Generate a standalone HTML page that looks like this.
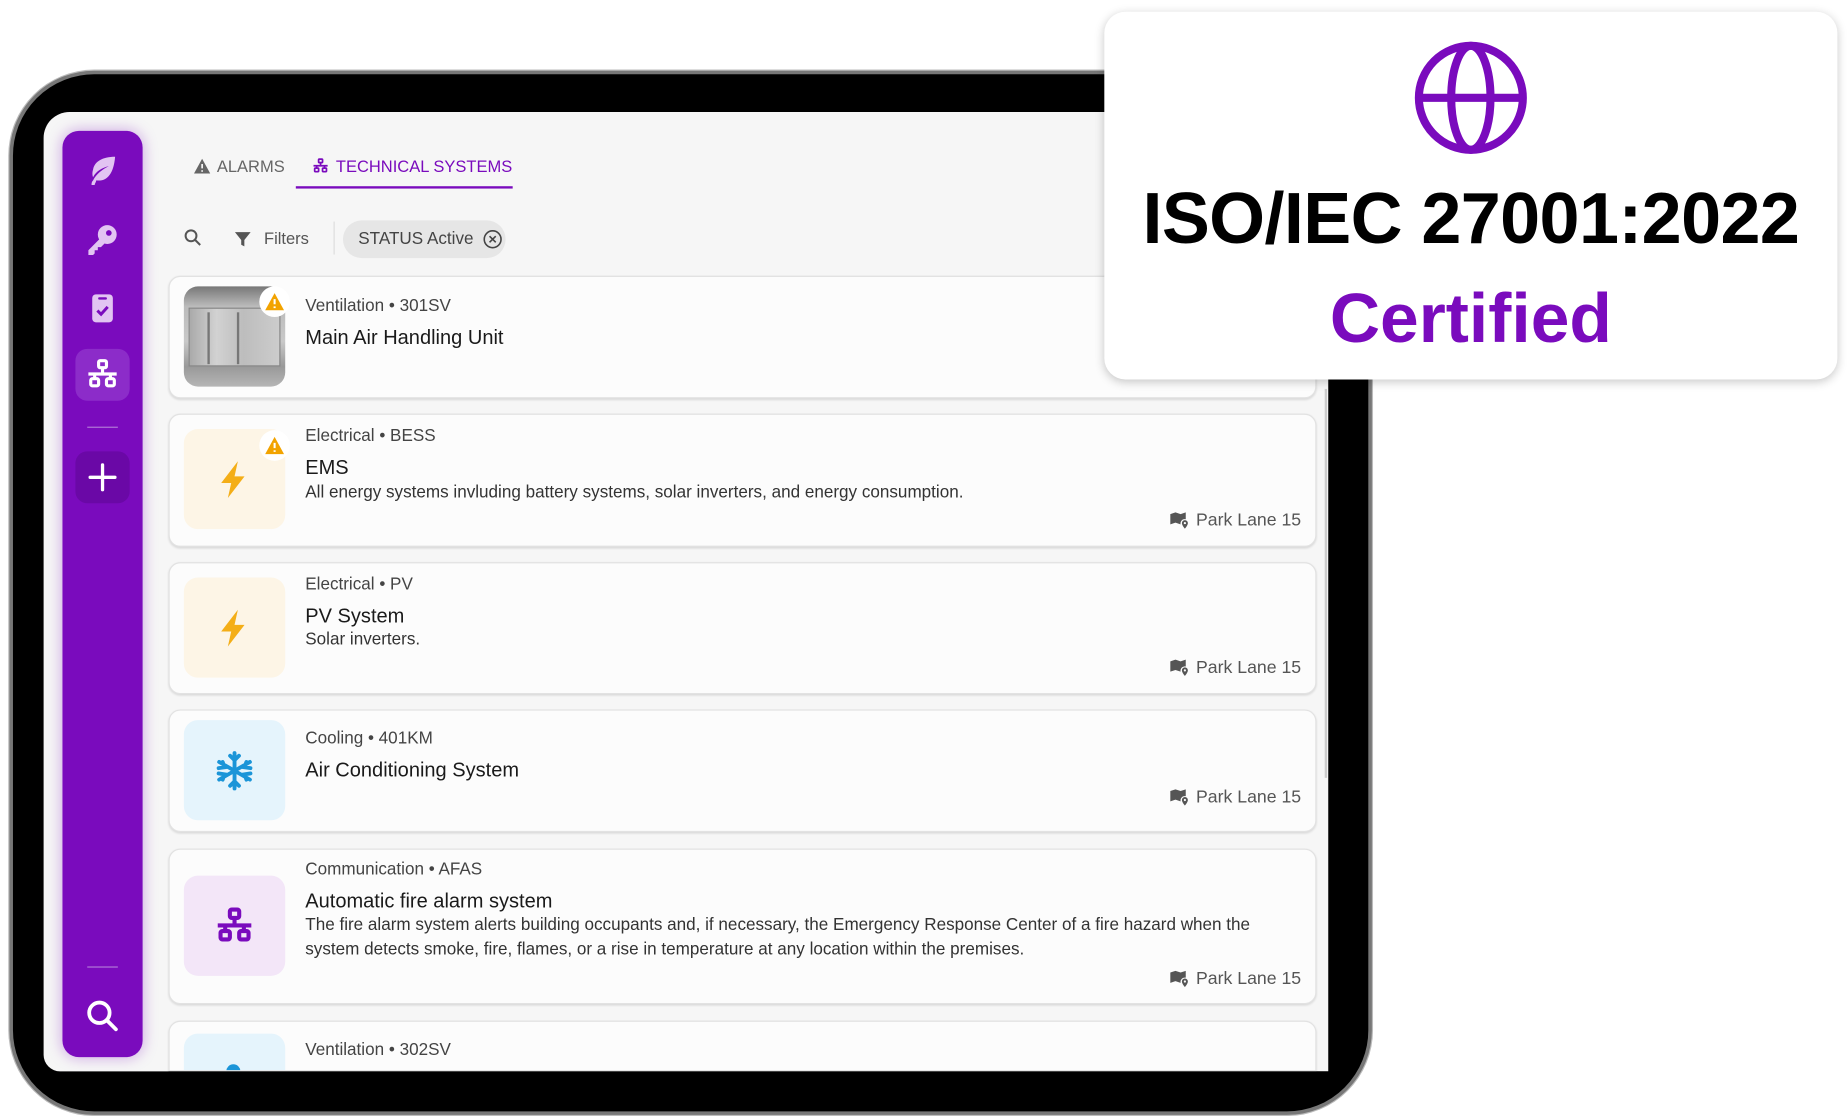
<!DOCTYPE html>
<html><head><meta charset="utf-8">
<style>
*{box-sizing:border-box;margin:0;padding:0}
html,body{width:1848px;height:1116px;overflow:hidden;background:#fff}
#w{position:absolute;left:0;top:0;width:1568px;height:947px;transform:scale(1.17857);transform-origin:0 0;font-family:"Liberation Sans",sans-serif}
.bezel{position:absolute;left:8px;top:60px;width:1156px;height:886px;background:#000;border-radius:72px;border:3px solid #777;box-shadow:0 0 0 1px #bbb}
.screen{position:absolute;left:37px;top:95px;width:1090px;height:814px;background:#f6f6f6;border-radius:22px 0 0 14px;overflow:hidden}
.side{position:absolute;left:53px;top:111px;width:68px;height:786px;background:#7a0bbd;border-radius:14px;box-shadow:0 0 12px rgba(122,11,189,.35)}
.ic{position:absolute;left:11px;width:46px;height:44px;border-radius:10px;display:flex;align-items:center;justify-content:center}
.card{position:absolute;left:143px;width:974px;background:#fcfcfc;border:1px solid #e2e2e2;border-radius:10px;box-shadow:0 1px 2px rgba(0,0,0,.12)}
.thumb{position:absolute;left:12px;width:86px;height:85px;border-radius:12px;display:flex;align-items:center;justify-content:center}
.cat{position:absolute;left:115px;font-size:14.5px;color:#444}
.ttl{position:absolute;left:115px;font-size:17px;color:#1a1a1a}
.desc{position:absolute;left:115px;font-size:14.5px;color:#333;line-height:21px;width:840px}
.loc{position:absolute;right:12px;font-size:15px;color:#555;display:flex;align-items:center;gap:5px}
.warn{position:absolute;left:76px;width:26px;height:26px;border-radius:50%;background:#fff;display:flex;align-items:center;justify-content:center}
.cert{position:absolute;left:937px;top:10px;width:622px;height:312px;background:#fff;border-radius:18px;box-shadow:0 2px 8px rgba(0,0,0,.22)}
</style></head><body><div id="w">
<div class="bezel"></div>
<div class="screen"></div>
<div style="position:absolute;left:1124px;top:330px;width:2px;height:330px;background:#ccc"></div>
<div class="side">
 <div class="ic" style="top:12px"><svg width="32" height="32" viewBox="0 0 24 24"><path fill="#e2c4f2" d="M20 3C12 3 7 6 6 11c-1 3 0 5 0 5 2-4 6-6 10-7-4 2-8 5-10 9-1 1-1 2-1 3h2c0-1 1-2 1-3 6 1 11-3 12-15z"/></svg></div>
 <div class="ic" style="top:70px"><svg width="32" height="32" viewBox="0 0 24 24"><circle cx="15" cy="9" r="6" fill="#e2c4f2"/><circle cx="16" cy="8" r="1.8" fill="#7a0bbd"/><path fill="#e2c4f2" d="M11 11l-8 8v3h3l1-1v-2h2v-2h2l3-3z"/></svg></div>
 <div class="ic" style="top:128px"><svg width="30" height="32" viewBox="0 0 24 24"><rect x="5" y="3" width="14" height="19" rx="2.5" fill="#e2c4f2"/><rect x="9" y="5" width="6" height="1.6" rx=".8" fill="#7a0bbd"/><path d="M8.5 14l2.5 2.5 4.5-5" stroke="#7a0bbd" stroke-width="2" fill="none"/></svg></div>
 <div class="ic" style="top:185px;background:#8c2cc9"><svg width="32" height="32" viewBox="0 0 24 24" fill="none" stroke="#fff" stroke-width="2"><rect x="9.5" y="3" width="5" height="4.5" rx="1"/><path d="M12 7.5v4M3 11.5h18M7 11.5v3M17 11.5v3"/><rect x="4.5" y="14.5" width="5" height="4.5" rx="1"/><rect x="14.5" y="14.5" width="5" height="4.5" rx="1"/></svg></div>
 <div style="position:absolute;left:21px;top:251px;width:26px;height:1px;background:#b27ad8"></div>
 <div class="ic" style="top:272px;background:#6a08a6"><svg width="28" height="28" viewBox="0 0 24 24" stroke="#fff" stroke-width="2.4" stroke-linecap="round"><path d="M12 3v18M3 12h18"/></svg></div>
 <div style="position:absolute;left:21px;top:709px;width:26px;height:1px;background:#b27ad8"></div>
 <div class="ic" style="top:729px"><svg width="32" height="32" viewBox="0 0 24 24" fill="none" stroke="#fff" stroke-width="2.4" stroke-linecap="round"><circle cx="10" cy="10" r="6.5"/><path d="M15 15l5.5 5.5"/></svg></div>
</div>
<!-- tabs -->
<div style="position:absolute;left:164px;top:133px;font-size:14px;color:#666;display:flex;align-items:center;gap:5px"><svg width="15" height="14" viewBox="0 0 24 22"><path d="M12 1L1 21h22z" fill="#666"/><path d="M12 8v6M12 16.5v2" stroke="#fff" stroke-width="2.2"/></svg>ALARMS</div>
<div style="position:absolute;left:264px;top:133px;font-size:14px;color:#7a0bbd;display:flex;align-items:center;gap:5px"><svg width="16" height="16" viewBox="0 0 24 24" fill="none" stroke="#7a0bbd" stroke-width="2.2"><rect x="9.5" y="3" width="5" height="4.5" rx="1"/><path d="M12 7.5v4M3 11.5h18M7 11.5v3M17 11.5v3"/><rect x="4.5" y="14.5" width="5" height="4.5" rx="1"/><rect x="14.5" y="14.5" width="5" height="4.5" rx="1"/></svg>TECHNICAL SYSTEMS</div>
<div style="position:absolute;left:251px;top:158px;width:184px;height:2px;background:#7a0bbd"></div>
<!-- filter row -->
<svg style="position:absolute;left:155px;top:193px" width="17" height="17" viewBox="0 0 24 24" fill="none" stroke="#555" stroke-width="2.4"><circle cx="10" cy="10" r="6.5"/><path d="M15 15l6 6"/></svg>
<svg style="position:absolute;left:198px;top:195px" width="16" height="16" viewBox="0 0 24 24"><path d="M2 3h20l-8 10v8l-4-2v-6z" fill="#555"/></svg>
<div style="position:absolute;left:224px;top:194px;font-size:14px;color:#555">Filters</div>
<div style="position:absolute;left:283px;top:188px;width:1px;height:28px;background:#ddd"></div>
<div style="position:absolute;left:291px;top:187px;width:138px;height:32px;border-radius:16px;background:#e6e6e6;font-size:14.5px;color:#444;display:flex;align-items:center;padding-left:13px;gap:7px">STATUS Active<svg width="18" height="18" viewBox="0 0 24 24" fill="none" stroke="#444" stroke-width="1.8"><circle cx="12" cy="12" r="9.5"/><path d="M8.5 8.5l7 7M15.5 8.5l-7 7"/></svg></div>

<!-- cards -->
<div class="card" style="top:234px;height:104px">
 <div class="thumb" style="top:8px;overflow:hidden;background:linear-gradient(180deg,#777 0%,#bbb 20%,#c8c8c8 55%,#999 80%,#b5b5b5 100%)">
  <div style="position:absolute;left:4px;top:18px;width:78px;height:50px;background:linear-gradient(90deg,#aaa,#d2d2d2 30%,#bdbdbd 60%,#ccc);border:1px solid #888"></div>
  <div style="position:absolute;left:20px;top:22px;width:2px;height:44px;background:#777"></div><div style="position:absolute;left:45px;top:22px;width:2px;height:44px;background:#777"></div>
 </div>
 <div class="warn" style="top:8px"><svg width="18" height="16" viewBox="0 0 24 22"><path d="M12 1L1 21h22z" fill="#f2a300"/><path d="M12 8v6M12 16.5v2" stroke="#fff" stroke-width="2.4"/></svg></div>
 <div class="cat" style="top:17px">Ventilation • 301SV</div>
 <div class="ttl" style="top:42px">Main Air Handling Unit</div>
</div>

<div class="card" style="top:351px;height:113px">
 <div class="thumb" style="top:12px;background:#fdf5e6"><svg width="34" height="38" viewBox="0 0 24 24"><path d="M14 1L4 14h6l-2 9 10-13h-6z" fill="#f4ae17"/></svg></div>
 <div class="warn" style="top:13px"><svg width="18" height="16" viewBox="0 0 24 22"><path d="M12 1L1 21h22z" fill="#f2a300"/><path d="M12 8v6M12 16.5v2" stroke="#fff" stroke-width="2.4"/></svg></div>
 <div class="cat" style="top:10px">Electrical • BESS</div>
 <div class="ttl" style="top:35px">EMS</div>
 <div class="desc" style="top:56px">All energy systems invluding battery systems, solar inverters, and energy consumption.</div>
 <div class="loc" style="top:81px"><svg width="18" height="16" viewBox="0 0 24 22"><path d="M1 3l6-2 6 2 6-2v8a5 5 0 0 0-6 6l-6-2-6 2z" fill="#555"/><path d="M18 10a3.5 3.5 0 0 1 3.5 3.5c0 2.5-3.5 6.5-3.5 6.5s-3.5-4-3.5-6.5A3.5 3.5 0 0 1 18 10z" fill="#555"/><circle cx="18" cy="13.5" r="1.3" fill="#fcfcfc"/></svg>Park Lane 15</div>
</div>

<div class="card" style="top:477px;height:112px">
 <div class="thumb" style="top:12px;background:#fdf5e6"><svg width="34" height="38" viewBox="0 0 24 24"><path d="M14 1L4 14h6l-2 9 10-13h-6z" fill="#f4ae17"/></svg></div>
 <div class="cat" style="top:10px">Electrical • PV</div>
 <div class="ttl" style="top:35px">PV System</div>
 <div class="desc" style="top:55px">Solar inverters.</div>
 <div class="loc" style="top:80px"><svg width="18" height="16" viewBox="0 0 24 22"><path d="M1 3l6-2 6 2 6-2v8a5 5 0 0 0-6 6l-6-2-6 2z" fill="#555"/><path d="M18 10a3.5 3.5 0 0 1 3.5 3.5c0 2.5-3.5 6.5-3.5 6.5s-3.5-4-3.5-6.5A3.5 3.5 0 0 1 18 10z" fill="#555"/><circle cx="18" cy="13.5" r="1.3" fill="#fcfcfc"/></svg>Park Lane 15</div>
</div>

<div class="card" style="top:602px;height:104px">
 <div class="thumb" style="top:8px;background:#e5f4fc"><svg width="36" height="40" viewBox="0 0 24 24" stroke="#1b95d8" stroke-width="2.2" stroke-linecap="round" fill="none"><path d="M12 2v20M3.3 7l17.4 10M3.3 17l17.4-10M9.5 3.5L12 6l2.5-2.5M9.5 20.5L12 18l2.5 2.5M3 10.5l3.3-.5-1-3M21 13.5l-3.3.5 1 3M3 13.5l3.3.5-1 3M21 10.5l-3.3-.5 1-3"/></svg></div>
 <div class="cat" style="top:16px">Cooling • 401KM</div>
 <div class="ttl" style="top:41px">Air Conditioning System</div>
 <div class="loc" style="top:65px"><svg width="18" height="16" viewBox="0 0 24 22"><path d="M1 3l6-2 6 2 6-2v8a5 5 0 0 0-6 6l-6-2-6 2z" fill="#555"/><path d="M18 10a3.5 3.5 0 0 1 3.5 3.5c0 2.5-3.5 6.5-3.5 6.5s-3.5-4-3.5-6.5A3.5 3.5 0 0 1 18 10z" fill="#555"/><circle cx="18" cy="13.5" r="1.3" fill="#fcfcfc"/></svg>Park Lane 15</div>
</div>

<div class="card" style="top:720px;height:132px">
 <div class="thumb" style="top:22px;background:#f3e6f8"><svg width="38" height="38" viewBox="0 0 24 24" fill="none" stroke="#7a0bbd" stroke-width="2.2"><rect x="9.5" y="3" width="5" height="4.5" rx="1"/><path d="M12 7.5v4M3 11.5h18M7 11.5v3M17 11.5v3"/><rect x="4.5" y="14.5" width="5" height="4.5" rx="1"/><rect x="14.5" y="14.5" width="5" height="4.5" rx="1"/></svg></div>
 <div class="cat" style="top:9px">Communication • AFAS</div>
 <div class="ttl" style="top:34px">Automatic fire alarm system</div>
 <div class="desc" style="top:54px">The fire alarm system alerts building occupants and, if necessary, the Emergency Response Center of a fire hazard when the system detects smoke, fire, flames, or a rise in temperature at any location within the premises.</div>
 <div class="loc" style="top:101px"><svg width="18" height="16" viewBox="0 0 24 22"><path d="M1 3l6-2 6 2 6-2v8a5 5 0 0 0-6 6l-6-2-6 2z" fill="#555"/><path d="M18 10a3.5 3.5 0 0 1 3.5 3.5c0 2.5-3.5 6.5-3.5 6.5s-3.5-4-3.5-6.5A3.5 3.5 0 0 1 18 10z" fill="#555"/><circle cx="18" cy="13.5" r="1.3" fill="#fcfcfc"/></svg>Park Lane 15</div>
</div>

<div class="card" style="top:866px;height:43px;border-radius:10px 10px 0 0;overflow:hidden">
 <div class="thumb" style="top:10px;background:#e5f4fc;overflow:hidden"><div style="position:absolute;left:36px;top:26px;width:12px;height:12px;border-radius:50%;background:#1b95d8"></div></div>
 <div class="cat" style="top:16px">Ventilation • 302SV</div>
</div>
<div style="position:absolute;left:143px;top:909px;width:990px;height:20px;background:#000"></div>

<div class="cert">
 <svg style="position:absolute;left:262px;top:24px" width="98" height="98" viewBox="0 0 100 100" fill="none" stroke="#7a0bbd" stroke-width="7"><ellipse cx="50" cy="50" rx="45" ry="45"/><ellipse cx="50" cy="50" rx="17" ry="45"/><path d="M5 50h90"/></svg>
 <div style="position:absolute;left:0;width:100%;top:140px;text-align:center;font-size:61px;font-weight:bold;color:#000;letter-spacing:-0.5px">ISO/IEC 27001:2022</div>
 <div style="position:absolute;left:0;width:100%;top:226px;text-align:center;font-size:59px;font-weight:bold;color:#7a0bbd">Certified</div>
</div>
</div></body></html>
